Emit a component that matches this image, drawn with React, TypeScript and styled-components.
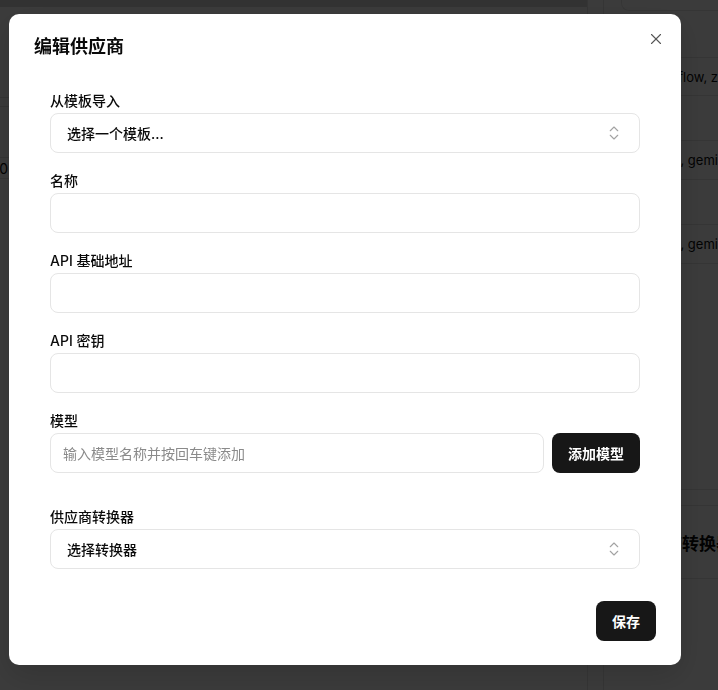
import React from 'react';
import styled, { createGlobalStyle } from 'styled-components';
import { X, ChevronsUpDown } from 'lucide-react';

const GlobalStyle = createGlobalStyle`
  * { box-sizing: border-box; }
  html, body { margin: 0; padding: 0; }
  body {
    font-family: Inter, "Noto Sans CJK SC", sans-serif;
    background: #fff;
    color: #0a0a0a;
    overflow: hidden;
  }
`;

// page behind the dialog (mostly hidden)
const Page = styled.div`
  width: 718px;
  height: 690px;
  display: flex;
  background: #fff;
  overflow: hidden;
`;

const MainCol = styled.div`
  width: 588px;
  flex-shrink: 0;
  border-right: 1px solid #e5e5e5;
  display: flex;
  flex-direction: column;
`;

const TopBar = styled.div`
  height: 7px;
  background: #d9d9d9;
`;

const MainTable = styled.div`
  margin-top: 90px;
  display: flex;
  flex-direction: column;
`;

const MainRow = styled.div<{ $h: number }>`
  height: ${({ $h }) => $h}px;
  border-top: 1px solid #e5e5e5;
  display: flex;
  align-items: center;
`;

const ClippedCell = styled.div`
  width: 8px;
  overflow: hidden;
  display: flex;
  justify-content: flex-end;
  font-size: 14px;
  white-space: nowrap;
`;

const Gutter = styled.div`
  width: 16px;
  flex-shrink: 0;
  border-right: 1px solid #e5e5e5;
`;

const SideCol = styled.div`
  flex: 1;
  padding-left: 17px;
  display: flex;
  flex-direction: column;
`;

const TopCard = styled.div`
  height: 11px;
  border: 1px solid #e5e5e5;
  border-top: none;
  border-radius: 0 0 8px 8px;
`;

const SideTable = styled.div`
  margin-top: 46px;
  display: flex;
  flex-direction: column;
  border-bottom: 1px solid #e5e5e5;
`;

const SideRow = styled.div<{ $h: number }>`
  height: ${({ $h }) => $h}px;
  border-top: 1px solid #e5e5e5;
  display: flex;
  align-items: center;
  padding-left: 18px;
  font-size: 13px;
  white-space: nowrap;
`;

const SideSection = styled.div`
  margin-top: 225px;
  border-top: 1px solid #e5e5e5;
  height: 90px;
  display: flex;
  flex-direction: column;
`;

const SectionHead = styled.div`
  margin-top: 15px;
  border-top: 1px solid #e5e5e5;
  border-bottom: 1px solid #e5e5e5;
  height: 74px;
  display: flex;
  align-items: center;
  padding-left: 10px;
  font-size: 17px;
  font-weight: 700;
  white-space: nowrap;
`;

// dialog
const Overlay = styled.div`
  position: fixed;
  inset: 0;
  background: rgba(0, 0, 0, 0.77);
  display: flex;
  align-items: flex-start;
  justify-content: flex-start;
  padding: 14px 0 0 9px;
`;

const Dialog = styled.div`
  position: relative;
  width: 672px;
  background: #fff;
  border-radius: 10px;
  padding: 24px 25px 24px;
  box-shadow: 0 10px 30px rgba(0, 0, 0, 0.15);
`;

const Title = styled.h2`
  margin: 0 0 35px;
  font-size: 18px;
  line-height: 18px;
  font-weight: 700;
  color: #0a0a0a;
`;

const CloseButton = styled.button`
  position: absolute;
  top: 16px;
  right: 16px;
  width: 18px;
  height: 18px;
  padding: 0;
  border: none;
  background: none;
  color: #555;
  display: flex;
  cursor: pointer;
`;

const Form = styled.div`
  padding: 0 16px;
  display: flex;
  flex-direction: column;
  gap: 18px;
`;

const Field = styled.div<{ $extra?: boolean }>`
  display: flex;
  flex-direction: column;
  gap: 2px;
  margin-bottom: ${({ $extra }) => ($extra ? '16px' : '0')};
`;

const Label = styled.label`
  font-size: 14px;
  line-height: 20px;
  font-weight: 500;
  color: #0a0a0a;
`;

const TextInput = styled.input`
  height: 40px;
  width: 100%;
  border: 1px solid #e5e5e5;
  border-radius: 8px;
  padding: 0 12px;
  font-family: inherit;
  font-size: 14px;
  color: #0a0a0a;
  background: #fff;
  outline: none;
  &::placeholder {
    color: #8a8a8a;
  }
`;

const SelectTrigger = styled.button`
  height: 40px;
  width: 100%;
  border: 1px solid #e5e5e5;
  border-radius: 8px;
  padding: 0 16px;
  display: flex;
  align-items: center;
  justify-content: space-between;
  background: #fff;
  font-family: inherit;
  font-size: 14px;
  font-weight: 500;
  color: #0a0a0a;
  cursor: pointer;
  svg {
    color: #a3a3a3;
  }
`;

const InputRow = styled.div`
  display: flex;
  gap: 8px;
`;

const DarkButton = styled.button`
  height: 40px;
  flex-shrink: 0;
  padding: 0 16px;
  border: none;
  border-radius: 8px;
  background: #171717;
  color: #fff;
  font-family: inherit;
  font-size: 14px;
  font-weight: 600;
  cursor: pointer;
`;

const Footer = styled.div`
  margin-top: 32px;
  display: flex;
  justify-content: flex-end;
`;

function Select({ value }: { value: string }) {
  return (
    <SelectTrigger type="button">
      <span>{value}</span>
      <ChevronsUpDown size={18} strokeWidth={1.5} />
    </SelectTrigger>
  );
}

export default function App() {
  return (
    <>
      <GlobalStyle />
      <Page>
        <MainCol>
          <TopBar />
          <MainTable>
            <MainRow $h={9} />
            <MainRow $h={51} />
            <MainRow $h={21}>
              <ClippedCell>100</ClippedCell>
            </MainRow>
            <MainRow $h={1} />
          </MainTable>
        </MainCol>
        <Gutter />
        <SideCol>
          <TopCard />
          <SideTable>
            <SideRow $h={38}>siliconflow, zhipu</SideRow>
            <SideRow $h={45} />
            <SideRow $h={39}>openai, gemini</SideRow>
            <SideRow $h={45} />
            <SideRow $h={39}>openai, gemini</SideRow>
          </SideTable>
          <SideSection>
            <SectionHead>供应商转换器</SectionHead>
          </SideSection>
        </SideCol>
      </Page>

      <Overlay>
        <Dialog>
          <Title>编辑供应商</Title>
          <CloseButton type="button" aria-label="关闭">
            <X size={18} strokeWidth={1.5} />
          </CloseButton>

          <Form>
            <Field>
              <Label>从模板导入</Label>
              <Select value="选择一个模板..." />
            </Field>
            <Field>
              <Label>名称</Label>
              <TextInput />
            </Field>
            <Field>
              <Label>API 基础地址</Label>
              <TextInput />
            </Field>
            <Field>
              <Label>API 密钥</Label>
              <TextInput />
            </Field>
            <Field $extra>
              <Label>模型</Label>
              <InputRow>
                <TextInput placeholder="输入模型名称并按回车键添加" />
                <DarkButton type="button">添加模型</DarkButton>
              </InputRow>
            </Field>
            <Field>
              <Label>供应商转换器</Label>
              <Select value="选择转换器" />
            </Field>
          </Form>

          <Footer>
            <DarkButton type="button">保存</DarkButton>
          </Footer>
        </Dialog>
      </Overlay>
    </>
  );
}
